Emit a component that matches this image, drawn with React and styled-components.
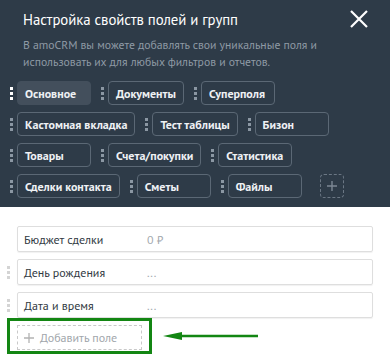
import React from "react";
import styled, { createGlobalStyle } from "styled-components";

const GlobalStyle = createGlobalStyle`
  html, body { margin: 0; padding: 0; background: #ffffff; }
  body { font-family: "PT Sans", Roboto, "Noto Sans", "Liberation Sans", sans-serif; }
  * { box-sizing: border-box; }
`;

const Page = styled.div`
  width: 390px;
  height: 354px;
  overflow: hidden;
  background: #ffffff;
`;

const Header = styled.div`
  background: #2e3b48;
  padding: 10px 10px 9px 10px;
`;

const TitleRow = styled.div`
  display: flex;
  justify-content: space-between;
  align-items: flex-start;
  padding-left: 13px;
`;

const Title = styled.h1`
  margin: 0;
  font-size: 14.8px;
  line-height: 20px;
  font-weight: 400;
  letter-spacing: -0.05px;
  color: #ffffff;
`;

const CloseButton = styled.button`
  border: 0;
  background: none;
  padding: 0;
  margin: 0 12px 0 0;
  width: 18px;
  height: 18px;
  cursor: pointer;
  display: flex;
`;

const Description = styled.p`
  margin: 6px 0 0 13px;
  font-size: 11.7px;
  line-height: 17px;
  color: #8f9aa5;
  width: 320px;
`;

const Tabs = styled.div`
  display: flex;
  flex-wrap: wrap;
  column-gap: 10px;
  row-gap: 7px;
  margin-top: 11px;
  width: 370px;
`;

const TabItem = styled.div`
  display: flex;
  align-items: center;
  gap: 4px;
`;

const Handle = styled.span`
  display: flex;
  flex-direction: column;
  gap: 2px;
  width: 3px;
  visibility: ${(p) => (p.$hidden ? "hidden" : "visible")};
`;

const Dot = styled.span`
  width: 3px;
  height: 3px;
  background: ${(p) => p.$color};
`;

const Tab = styled.div`
  height: 24px;
  min-width: 74px;
  padding: 0 7px;
  display: flex;
  align-items: center;
  border-radius: 4px;
  border: 1px solid ${(p) => (p.$active ? "#434f5c" : "#5b6875")};
  background: ${(p) => (p.$active ? "#434f5c" : "transparent")};
  color: #eef1f4;
  font-size: 12px;
  font-weight: 700;
  white-space: nowrap;
`;

const AddTab = styled.div`
  width: 24px;
  height: 24px;
  margin-left: 8px;
  border: 1px dashed #6b7784;
  border-radius: 4px;
  display: flex;
  align-items: center;
  justify-content: center;
`;

const Body = styled.div`
  padding: 19px 17px 0 7px;
`;

const FieldList = styled.div`
  display: flex;
  flex-direction: column;
  gap: 7px;
`;

const FieldRow = styled.div`
  display: flex;
  align-items: center;
  gap: 7px;
`;

const FieldBox = styled.div`
  flex: 1;
  height: 26px;
  border: 1px solid #dedede;
  border-radius: 2px;
  box-shadow: 0 1px 1px rgba(0, 0, 0, 0.06);
  display: flex;
  align-items: center;
  padding-left: 6px;
  font-size: 12px;
`;

const FieldLabel = styled.span`
  width: 123px;
  color: #313942;
`;

const FieldValue = styled.span`
  color: #a3a9ae;
`;

const AddRow = styled.div`
  display: flex;
  align-items: center;
  gap: 11px;
`;

const Highlight = styled.div`
  border: 3px solid #138613;
  padding: 4px 7px 1px 7px;
`;

const AddField = styled.div`
  width: 125px;
  height: 25px;
  border: 1px dashed #c9c9c9;
  display: flex;
  align-items: center;
  gap: 6px;
  padding-left: 6px;
  font-size: 12px;
  color: #a1a6ab;
`;

const Grip = ({ color, hidden }) => (
  <Handle $hidden={hidden}>
    <Dot $color={color} />
    <Dot $color={color} />
    <Dot $color={color} />
  </Handle>
);

const rows = [
  { name: "Основное", active: true },
  { name: "Документы" },
  { name: "Суперполя" },
  { name: "Кастомная вкладка" },
  { name: "Тест таблицы" },
  { name: "Бизон" },
  { name: "Товары" },
  { name: "Счета/покупки" },
  { name: "Статистика" },
  { name: "Сделки контакта" },
  { name: "Сметы" },
  { name: "Файлы" },
];

const fields = [
  { label: "Бюджет сделки", value: "0 ₽", fixed: true },
  { label: "День рождения", value: "..." },
  { label: "Дата и время", value: "..." },
];

export default function App() {
  return (
    <Page>
      <GlobalStyle />
      <Header>
        <TitleRow>
          <Title>Настройка свойств полей и групп</Title>
          <CloseButton aria-label="Закрыть">
            <svg width="18" height="18" viewBox="0 0 18 18">
              <path d="M1 1 L17 17 M17 1 L1 17" stroke="#ffffff" strokeWidth="2.2" fill="none" />
            </svg>
          </CloseButton>
        </TitleRow>
        <Description>
          В amoCRM вы можете добавлять свои уникальные поля и использовать их для любых фильтров и отчетов.
        </Description>
        <Tabs>
          {rows.map((t) => (
            <TabItem key={t.name}>
              <Grip color={t.active ? "#ffffff" : "#8b97a3"} />
              <Tab $active={t.active}>{t.name}</Tab>
            </TabItem>
          ))}
          <AddTab>
            <svg width="12" height="12" viewBox="0 0 12 12">
              <path d="M6 1 V11 M1 6 H11" stroke="#7d8894" strokeWidth="1.4" />
            </svg>
          </AddTab>
        </Tabs>
      </Header>
      <Body>
        <FieldList>
          {fields.map((f) => (
            <FieldRow key={f.label}>
              <Grip color="#d4d4d4" hidden={f.fixed} />
              <FieldBox>
                <FieldLabel>{f.label}</FieldLabel>
                <FieldValue>{f.value}</FieldValue>
              </FieldBox>
            </FieldRow>
          ))}
        </FieldList>
        <AddRow>
          <Highlight>
            <AddField>
              <svg width="10" height="10" viewBox="0 0 10 10">
                <path d="M5 0 V10 M0 5 H10" stroke="#b3b3b3" strokeWidth="1.3" />
              </svg>
              Добавить поле
            </AddField>
          </Highlight>
          <svg width="96" height="10" viewBox="0 0 96 10">
            <path d="M18 5 H95" stroke="#138613" strokeWidth="2.5" />
            <path d="M0 5 L19 1 L19 9 Z" fill="#138613" />
          </svg>
        </AddRow>
      </Body>
    </Page>
  );
}
